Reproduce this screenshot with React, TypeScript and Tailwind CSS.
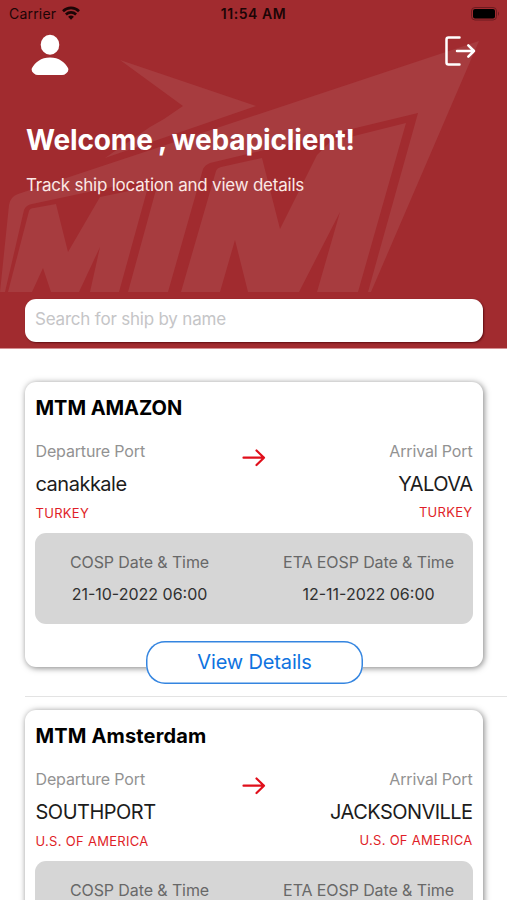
type Ship = {
  name: string;
  nameClass: string;
  from: string;
  fromCountry: string;
  to: string;
  toCountry: string;
  cosp?: string;
  eta?: string;
};

const ships: Ship[] = [
  {
    name: "MTM AMAZON",
    nameClass: "tracking-[-0.05px]",
    from: "canakkale",
    fromCountry: "TURKEY",
    to: "YALOVA",
    toCountry: "TURKEY",
    cosp: "21-10-2022 06:00",
    eta: "12-11-2022 06:00",
  },
  {
    name: "MTM Amsterdam",
    nameClass: "tracking-[0.15px]",
    from: "SOUTHPORT",
    fromCountry: "U.S. OF AMERICA",
    to: "JACKSONVILLE",
    toCountry: "U.S. OF AMERICA",
  },
];

function Watermark() {
  return (
    <svg className="absolute inset-0" width="507" height="348" viewBox="0 0 507 348" fill="#a73c3f">
      <path d="M120 60L256 106L105 158L150 127L164 119L183 106Z" />
      {/* swoosh and T stem */}
      <path d="M479 41L371 292H368L418 113L210 163Q205 165 203 169L168 292H128L157 186L154 178L32 204Q26 205 24 210L5 292H0L9 205Q10 197 18 194Z" />
      {/* first M */}
      <path d="M29 211Q30 208 34 208L56 204L68 252L100 197L148 187L119 292H90L100 247L79 292H51L43 268L32 292H8Z" />
      {/* second M */}
      <path d="M216 171Q217 168 221 167L262 158L280 229L317 155L330 142L406 123L358 292H317L340 212L299 292H248L235 240L220 292H181Z" />
    </svg>
  );
}

function StatusBar() {
  return (
    <div className="relative flex h-7 items-center justify-between pr-[7px] pl-[9px] text-[14px] text-[#1c0506]">
      <div className="flex items-center gap-[6px]">
        <span className="-mt-px tracking-[0.2px]">Carrier</span>
        <svg className="-mt-[2px]" width="18" height="14" viewBox="0 0 18 14" fill="none" stroke="#1c0506" strokeWidth="2.6">
          <path d="M1 5.2C5.5 .8 12.5 .8 17 5.2" />
          <path d="M3.9 8.5C6.8 5.7 11.2 5.7 14.1 8.5" />
          <path d="M9 13.8L6.1 10.8Q9 8.4 11.9 10.8Z" fill="#1c0506" stroke="none" />
        </svg>
      </div>
      <span className="absolute top-[3px] left-1/2 -translate-x-1/2 font-semibold tracking-[0.55px] whitespace-nowrap">
        11:54 AM
      </span>
      <svg className="-mt-px" width="29" height="14" viewBox="0 0 29 14">
        <rect x="0.5" y="0.5" width="25" height="12.5" rx="3.5" fill="none" stroke="#6d1b20" />
        <rect x="2" y="2" width="22" height="9.5" rx="2" fill="#000" />
        <path d="M27 4.5Q29 6.7 27 9Z" fill="#6d1b20" />
      </svg>
    </div>
  );
}

function ShipCard({ ship }: { ship: Ship }) {
  return (
    <div className="relative mx-[25px] h-[285px] w-[458px] rounded-[11px] bg-white px-[10px] shadow-[1px_1px_6px_rgba(0,0,0,0.5)]">
      <h2 className={`pt-[12px] pl-[0.5px] text-[20px] leading-[28px] font-bold text-black ${ship.nameClass}`}>
        {ship.name}
      </h2>

      <div className="mt-[16px] flex justify-between px-[0.5px]">
        <div>
          <p className="text-[16px] leading-[26px] tracking-[-0.15px] text-[#929292]">Departure Port</p>
          <p className="mt-[5px] text-[20px] leading-[30px] tracking-[-0.5px] text-[#1c1c1c]">{ship.from}</p>
          <p className="mt-[4px] text-[13px] leading-[20px] tracking-[0.3px] text-[#e01e28]">{ship.fromCountry}</p>
        </div>
        <div className="text-right">
          <p className="text-[16px] leading-[26px] tracking-[-0.15px] text-[#929292]">Arrival Port</p>
          <p className="mt-[5px] text-[20px] leading-[30px] tracking-[-0.55px] text-[#1c1c1c]">{ship.to}</p>
          <p className="mt-[3px] text-[13px] leading-[20px] tracking-[0.3px] text-[#e01e28]">{ship.toCountry}</p>
        </div>
      </div>
      <svg
        className="absolute top-[67px] left-[217px]"
        width="24"
        height="18"
        viewBox="0 0 24 18"
        fill="none"
        stroke="#e00f1b"
        strokeWidth="2.2"
        strokeLinecap="round"
        strokeLinejoin="round"
      >
        <path d="M1.5 8.7H22M14.5 1.5L22 8.7L14.5 16" />
      </svg>

      <div className="mt-[10px] flex h-[91px] rounded-[11px] bg-[#d6d6d6] pt-[15px] text-center whitespace-nowrap">
        <div className="w-[209px]">
          <p className="text-[16px] leading-[28px] tracking-[-0.1px] text-[#686868]">COSP Date &amp; Time</p>
          {ship.cosp && <p className="mt-[4px] text-[16px] leading-[28px] text-[#303030]">{ship.cosp}</p>}
        </div>
        <div className="ml-[20px] w-[209px]">
          <p className="text-[16px] leading-[28px] tracking-[-0.1px] text-[#686868]">ETA EOSP Date &amp; Time</p>
          {ship.eta && <p className="mt-[4px] text-[16px] leading-[28px] text-[#303030]">{ship.eta}</p>}
        </div>
      </div>

      {ship.cosp && (
        <button className="absolute top-[259px] left-[121px] h-[43px] w-[217px] rounded-[19px] bg-white pb-px text-[20px] tracking-[-0.15px] text-[#0f73e0] shadow-[inset_0_0_0_1.5px_#3485e0]">
          View Details
        </button>
      )}
    </div>
  );
}

export default function App() {
  return (
    <main className="h-[900px] w-[507px] overflow-hidden bg-white font-['Inter','Liberation_Sans',sans-serif]">
      {/* Header */}
      <header className="relative h-[349px] border-b border-[#d58f92] bg-[#a12b2f]">
        <Watermark />
        <StatusBar />
        <div className="relative flex justify-between px-[31px]">
          <svg className="mt-[6px]" width="38" height="42" viewBox="0 0 38 42" fill="#fff">
            <ellipse cx="19" cy="10.7" rx="9.3" ry="10" />
            <path d="M19 23.5C28 23.5 34 28.5 37 34Q38.3 37 35 39.5Q33.5 41 31 41H7Q4.5 41 3 39.5Q-.3 37 1 34C4 28.5 10 23.5 19 23.5Z" />
          </svg>
          <svg
            className="mt-[8px]"
            width="31"
            height="31"
            viewBox="0 0 31 31"
            fill="none"
            stroke="#fff"
            strokeWidth="2.5"
            strokeLinecap="round"
            strokeLinejoin="round"
          >
            <path d="M14.5 1.5H3.5Q1.5 1.5 1.5 3.5V26.5Q1.5 28.5 3.5 28.5H14.5" />
            <path d="M12 15H29M23.3 9.3L29 15L23.3 20.7" />
          </svg>
        </div>
        <h1 className="relative mt-[46px] ml-[26px] text-[28px] leading-[36px] font-bold tracking-[-0.14px] whitespace-nowrap text-white [word-spacing:-1.2px]">
          Welcome , webapiclient!
        </h1>
        <p className="relative mt-[15px] ml-[26px] text-[17px] leading-[24px] tracking-[-0.22px] whitespace-nowrap text-[#fbe9e6]">
          Track ship location and view details
        </p>
        <div className="relative mt-[102px] ml-[25px] flex h-[43px] w-[458px] items-center rounded-[11px] bg-white px-[10px] pb-[2px] shadow-[1px_1px_2px_rgba(70,0,5,0.7)]">
          <input
            className="w-full text-[17px] tracking-[-0.2px] outline-none placeholder:text-[#c5c5c7]"
            placeholder="Search for ship by name"
          />
        </div>
      </header>

      {/* Ship list */}
      <div className="pt-[33px]">
        {ships.map((ship) => (
          <div key={ship.name}>
            <ShipCard ship={ship} />
            <div className="mt-[29px] mb-[13px] ml-[25px] h-px bg-[#e3e3e3]" />
          </div>
        ))}
      </div>
    </main>
  );
}
